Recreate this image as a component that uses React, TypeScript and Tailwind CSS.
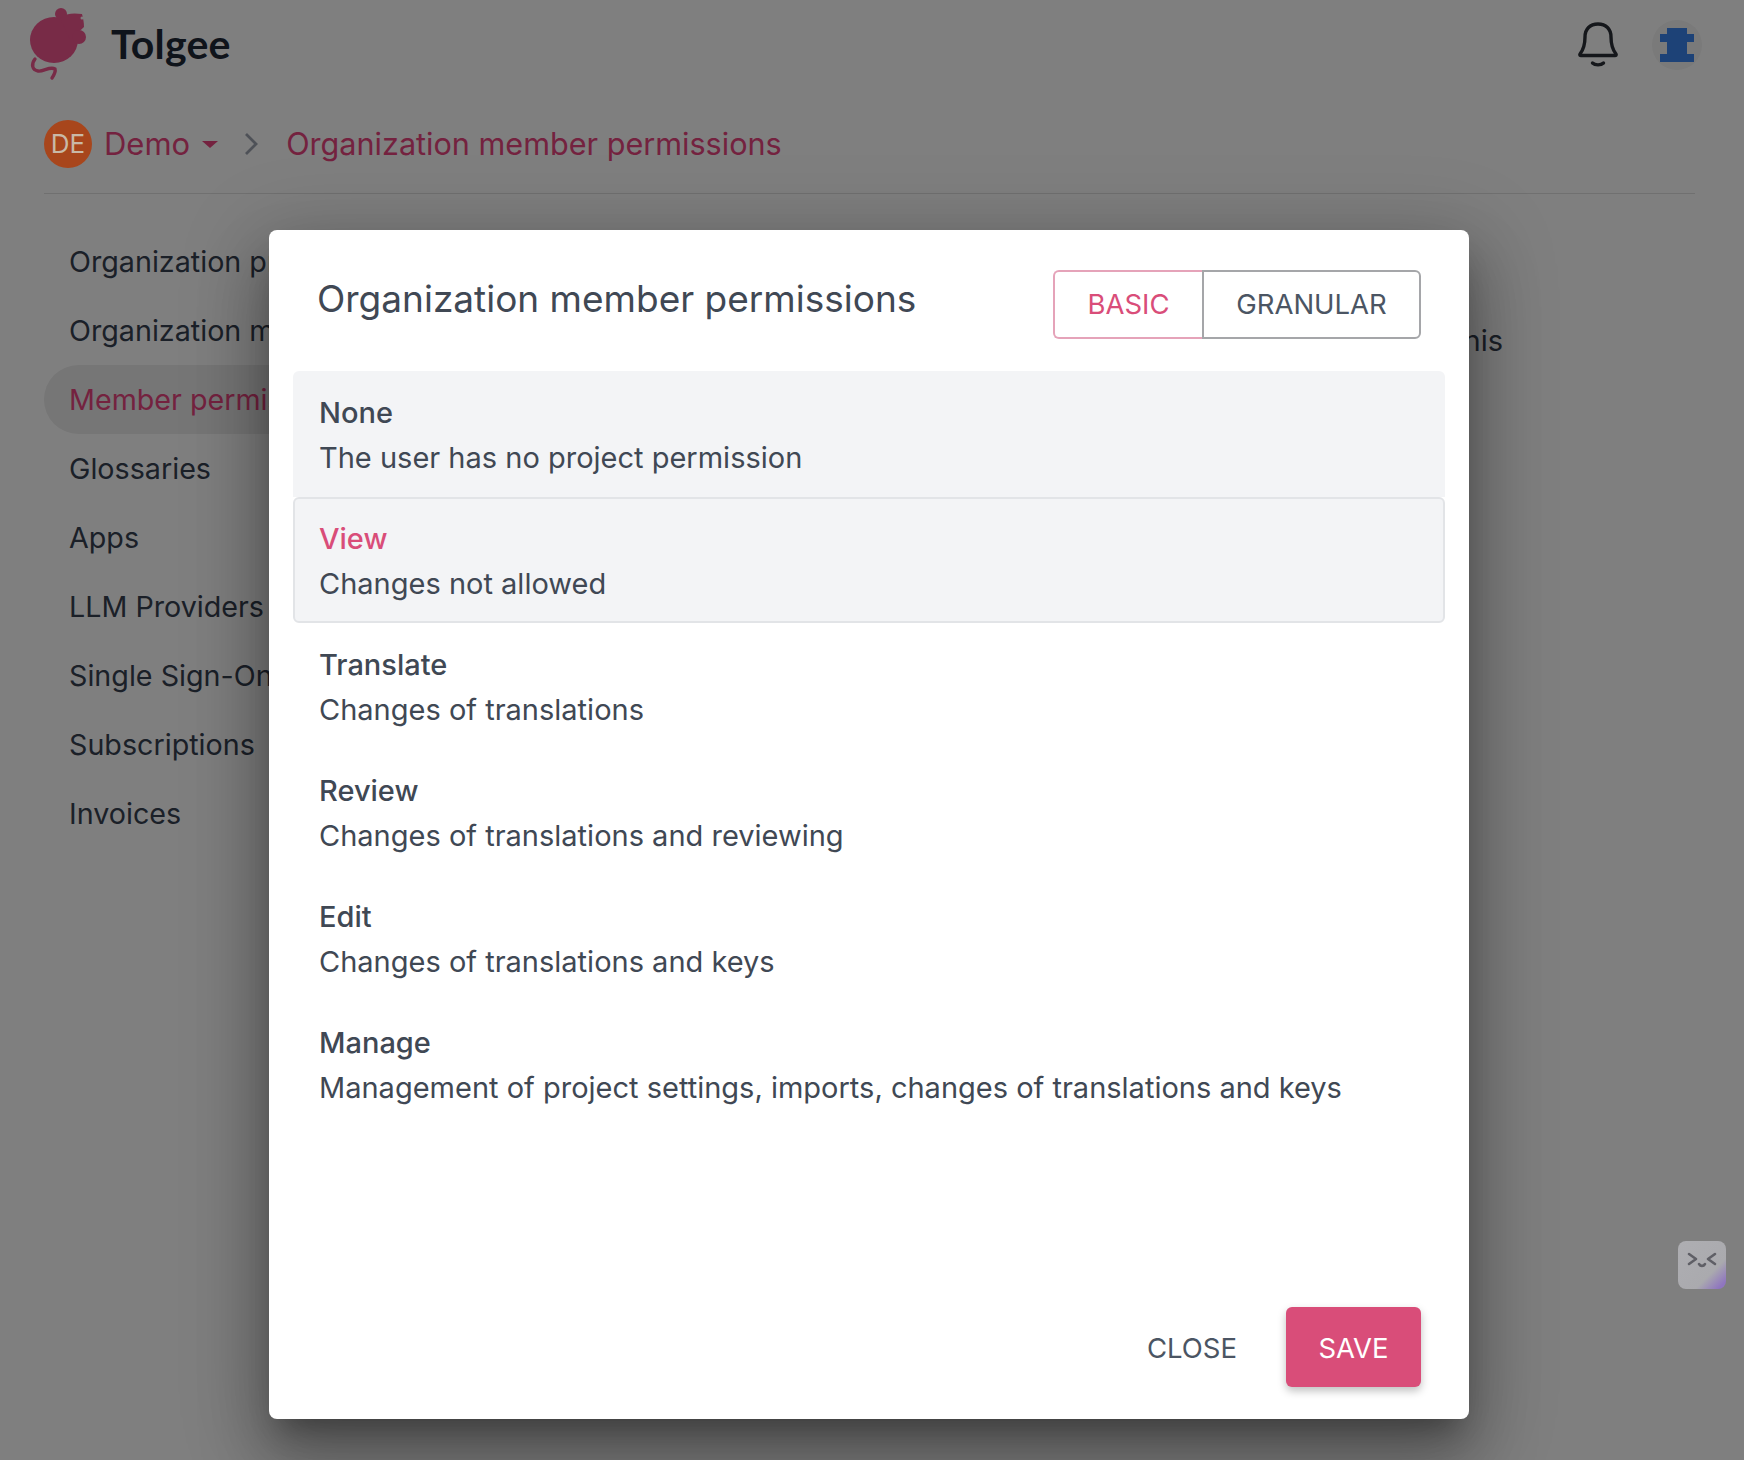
const sideItems = [
  "Organization profile",
  "Organization members",
  "Member permissions",
  "Glossaries",
  "Apps",
  "LLM Providers",
  "Single Sign-On",
  "Subscriptions",
  "Invoices",
];

const roles = [
  { name: "None", desc: "The user has no project permission" },
  { name: "View", desc: "Changes not allowed" },
  { name: "Translate", desc: "Changes of translations" },
  { name: "Review", desc: "Changes of translations and reviewing" },
  { name: "Edit", desc: "Changes of translations and keys" },
  { name: "Manage", desc: "Management of project settings, imports, changes of translations and keys" },
];

function MouseLogo() {
  return (
    <svg width="60" height="74" viewBox="0 0 60 74" className="shrink-0">
      <g fill="#f0568f">
        <ellipse cx="24" cy="32" rx="24" ry="23" />
        <circle cx="31" cy="6" r="6" />
        <path d="M30 10 C36 5 44 5 52 6 C53 10 54 14 54 19 L40 32 Z" />
        <circle cx="49" cy="29" r="7" />
      </g>
      <circle cx="52" cy="10" r="1.5" fill="#ffffff" />
      <path d="M5 51 C1 56 2 62 8 63 C13 64 20 58 25 61 C26 64 24 67 22 70" fill="none" stroke="#f0568f" strokeWidth="3.4" strokeLinecap="round" />
    </svg>
  );
}

function BellIcon() {
  return (
    <svg width="42" height="46" viewBox="0 0 42 46" fill="none" stroke="#2b2f36" strokeWidth="3.4" strokeLinecap="round" strokeLinejoin="round">
      <path d="M3 32 C7 27 8 22 8 15 C8 7 13 2 21 2 C29 2 34 7 34 15 C34 22 35 27 39 32 C39.5 33 39 33.5 38 33.5 L4 33.5 C3 33.5 2.5 33 3 32 Z" />
      <path d="M15.5 41 C18 43.5 24 43.5 26.5 41" />
    </svg>
  );
}

function PuzzleIcon() {
  return (
    <div className="flex h-[50px] w-[50px] items-center justify-center rounded-full bg-[#f4f4f4]">
      <svg width="34" height="34" viewBox="0 0 34 34" fill="#3a84ee">
        <path d="M7 0 H27 V6 H34 V14 H27 V26 H34 V34 H0 V26 H7 V14 H0 V6 H7 Z" />
      </svg>
    </div>
  );
}

function FloatingFace() {
  return (
    <div className="absolute left-[1678px] top-[1241px] z-20 flex h-[48px] w-[48px] items-start justify-center rounded-lg bg-[linear-gradient(135deg,#aeaeb2_0%,#aaaaae_68%,#8f75c0_92%)] pt-[11px]">
      <svg width="30" height="16" viewBox="0 0 30 16" fill="none" stroke="#5f5f66" strokeWidth="2.6" strokeLinecap="round" strokeLinejoin="round">
        <path d="M2 2 L9 7 L2 12" />
        <path d="M28 2 L21 7 L28 12" />
        <path d="M12 12 C13.5 14.5 16.5 14.5 18 12" />
      </svg>
    </div>
  );
}

export default function App() {
  return (
    <div className="relative h-[1460px] overflow-hidden bg-white font-['Inter',sans-serif] text-[#374151]">
      {/* page behind the dialog */}
      <header className="flex h-[90px] items-center justify-between pl-[30px] pr-[42px]">
        <div className="flex items-center gap-[21px]">
          <MouseLogo />
          <span className="pb-[3px] font-['Lato',sans-serif] text-[41px] font-bold tracking-[0.2px] text-[#1f2937]">Tolgee</span>
        </div>
        <div className="flex items-center gap-[33px]">
          <BellIcon />
          <PuzzleIcon />
        </div>
      </header>

      <div className="ml-[44px] mr-[49px] flex h-[104px] items-center border-b border-[#e0e0e0] pt-[4px] text-[#e8457f]">
        <div className="relative z-20 flex h-[48px] w-[48px] items-center justify-center rounded-full bg-[#a8461c] text-[26px] text-[#c9b9a7]">DE</div>
        <span className="ml-[12px] pt-[2px] text-[31px]">Demo</span>
        <span className="ml-[12px] mt-[2px] h-0 w-0 border-x-[8px] border-t-[7px] border-x-transparent border-t-[#e8457f]" />
        <svg width="16" height="24" viewBox="0 0 16 24" fill="none" stroke="#9ca3af" strokeWidth="2.8" className="ml-[25px]">
          <path d="M3 2 L13 12 L3 22" />
        </svg>
        <span className="ml-[27px] pt-[1px] text-[30.6px]">Organization member permissions</span>
      </div>

      <div className="flex pl-[44px] pt-[33px]">
        <nav className="w-[340px] shrink-0">
          {sideItems.map((item, i) => (
            <div
              key={item}
              className={
                i === 2
                  ? "flex h-[69px] items-center rounded-l-full bg-[#ececec] pl-[25px] text-[28.7px] whitespace-nowrap text-[#e8457f]"
                  : "flex h-[69px] items-center pl-[25px] text-[28.7px] whitespace-nowrap"
              }
            >
              {item}
            </div>
          ))}
        </nav>
        <div className="flex-1 pr-[241px] pt-[92px] text-right text-[29px] whitespace-nowrap">
          Set the base permissions that are granted to members of this
        </div>
      </div>

      <FloatingFace />

      {/* backdrop */}
      <div className="absolute inset-0 z-10 bg-black/50" />

      {/* dialog */}
      <div className="absolute left-[269px] top-[230px] z-30 flex h-[1189px] w-[1200px] flex-col rounded-lg bg-white text-[#404854] shadow-[0_20px_28px_-12px_rgba(0,0,0,0.3),0_42px_66px_6px_rgba(0,0,0,0.22),0_16px_80px_14px_rgba(0,0,0,0.18)]">
        <div className="flex items-start justify-between pl-[48px] pr-[48px] pt-[40px]">
          <h2 className="pt-[4px] text-[37px] leading-[50px]">Organization member permissions</h2>
          <div className="flex h-[69px] text-[27.5px]">
            <div className="flex w-[149px] items-center justify-center rounded-l-md border-2 border-r-0 border-[#e5a3b9] text-[#d94d79]">BASIC</div>
            <div className="flex w-[219px] items-center justify-center rounded-r-md border-2 border-[#a5a6a9] text-[#4b5563]">GRANULAR</div>
          </div>
        </div>

        <div className="mx-[24px] mt-[32px] flex flex-col">
          {roles.map((role, i) => (
            <div
              key={role.name}
              className={
                i === 0
                  ? "h-[126px] rounded-t-md bg-[#f3f4f6] pl-[26px] pt-[19px]"
                  : i === 1
                    ? "h-[126px] rounded-md border-2 border-[#e2e4e7] bg-[#f3f4f6] pl-[24px] pt-[17px]"
                    : "h-[126px] pl-[26px] pt-[19px]"
              }
            >
              <div className={i === 1 ? "text-[29px] leading-[45px] font-medium text-[#d94d79]" : "text-[29px] leading-[45px] font-medium"}>{role.name}</div>
              <div className="text-[29px] leading-[45px]">{role.desc}</div>
            </div>
          ))}
        </div>

        <div className="mt-auto flex items-center justify-end gap-[49px] pb-[32px] pr-[48px]">
          <span className="pt-[3px] text-[27.5px] text-[#4b5563]">CLOSE</span>
          <div className="flex h-[80px] w-[135px] items-center justify-center rounded-md bg-[#d94d79] pt-[3px] text-[27.5px] text-white shadow-[0_4px_8px_rgba(0,0,0,0.25)]">SAVE</div>
        </div>
      </div>
    </div>
  );
}
